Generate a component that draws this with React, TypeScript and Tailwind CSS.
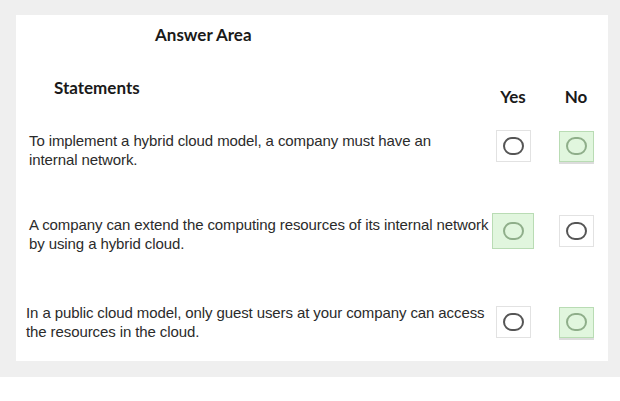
type Mark = "yes" | "no";

interface Statement {
    lines: string[];
    answer: Mark;
}

const statements: Statement[] = [
    {
        lines: [
            "To implement a hybrid cloud model, a company must have an",
            "internal network.",
        ],
        answer: "no",
    },
    {
        lines: [
            "A company can extend the computing resources of its internal network",
            "by using a hybrid cloud.",
        ],
        answer: "yes",
    },
    {
        lines: [
            "In a public cloud model, only guest users at your company can access",
            "the resources in the cloud.",
        ],
        answer: "no",
    },
];

const textClass = [
    "pt-[8px] text-[15px] leading-[19px] tracking-[-0.1px] whitespace-nowrap",
    "pt-[6px] text-[15px] leading-[19px] tracking-[-0.1px] whitespace-nowrap",
    "-ml-[3px] text-[15px] leading-[19px] tracking-[-0.1px] whitespace-nowrap",
];

const rowClass = [
    "col-span-3 grid grid-cols-[453px_62px_64px] items-center mt-[14px]",
    "col-span-3 grid grid-cols-[453px_62px_64px] items-center mt-[40px]",
    "col-span-3 grid grid-cols-[453px_62px_64px] items-center mt-[50px]",
];

function Radio({ selected, big }: { selected: boolean; big?: boolean }) {
    return (
        <div
            className={
                selected
                    ? big
                        ? "w-[42px] h-[36px] flex items-center justify-center border border-[#b9dcb4] bg-[#e1f6de]"
                        : "w-[35px] h-[31px] flex items-center justify-center border border-[#b9dcb4] bg-[#e1f6de] shadow-[0_2px_0_#dcdcdc]"
                    : "w-[35px] h-[32px] flex items-center justify-center border border-[#e2e2e2] bg-white"
            }
        >
            <div
                className={
                    selected
                        ? "w-[21px] h-[18px] rounded-full border-2 border-[#8fae8a]"
                        : "w-[21px] h-[18px] rounded-full border-2 border-[#555]"
                }
            />
        </div>
    );
}

export default function App() {
    return (
        <div className="min-h-[401px] bg-white font-['Liberation_Sans',Arial,sans-serif]">
            <div className="h-[377px] bg-[#efefef] pt-[15px] pl-[16px] pr-[12px]">
                <div className="h-[346px] bg-white text-[#2b2b2b]">
                    <h1 className="pl-[139px] pt-[7px] text-[17px] font-bold font-['Lato',sans-serif] text-[#1a1a1a]">
                        Answer Area
                    </h1>
                    <div className="grid grid-cols-[453px_62px_64px] pl-[13px] mt-[27px]">
                        <div className="pl-[25px] text-[17px] font-bold font-['Lato',sans-serif] text-[#1a1a1a]">
                            Statements
                        </div>
                        <div className="pt-[9px] text-center text-[17px] font-bold font-['Lato',sans-serif] text-[#1a1a1a]">
                            Yes
                        </div>
                        <div className="pt-[9px] text-center text-[17px] font-bold font-['Lato',sans-serif] text-[#1a1a1a]">
                            No
                        </div>

                        {statements.map((s, i) => (
                            <div key={i} className={rowClass[i]}>
                                <div className={textClass[i]}>
                                    {s.lines.map((l) => (
                                        <p key={l}>{l}</p>
                                    ))}
                                </div>
                                <div className="flex justify-center">
                                    <Radio
                                        selected={s.answer === "yes"}
                                        big={i === 1}
                                    />
                                </div>
                                <div className="flex justify-center">
                                    <Radio selected={s.answer === "no"} />
                                </div>
                            </div>
                        ))}
                    </div>
                </div>
            </div>
        </div>
    );
}
